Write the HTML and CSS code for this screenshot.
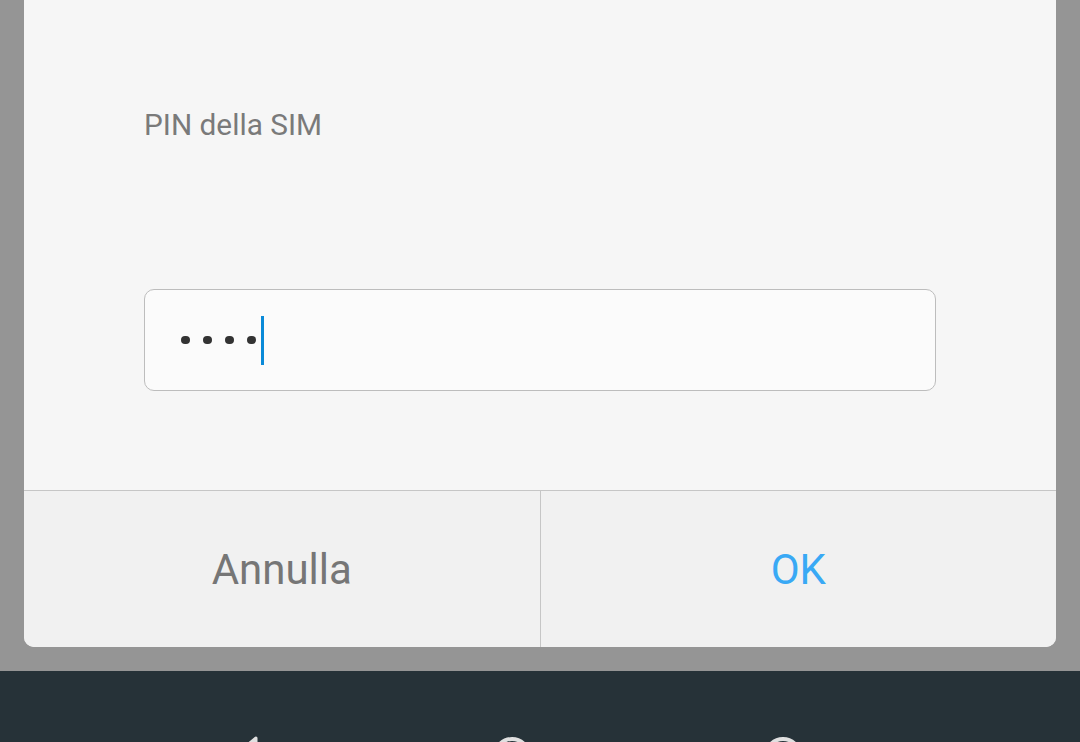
FILE: index.html
```html
<!DOCTYPE html>
<html lang="it">
<head>
<meta charset="utf-8">
<link rel="stylesheet" href="styles.css">
</head>
<body>
<div class="screen">
  <div class="dialog">
    <div class="content">
      <div class="label">PIN della SIM</div>
      <div class="field">
        <span class="dot"></span><span class="dot"></span><span class="dot"></span><span class="dot"></span><span class="cursor"></span>
      </div>
    </div>
    <div class="actions">
      <div class="btn cancel">Annulla</div>
      <div class="btn ok">OK</div>
    </div>
  </div>
  <div class="navbar">
    <svg class="nav-back" width="40" height="40" viewBox="0 0 40 40"><path d="M28 2 L6 20 L28 38 Z" fill="none" stroke="#e0e0e0" stroke-width="3" stroke-linejoin="round"/></svg>
    <svg class="nav-home" width="40" height="40" viewBox="0 0 40 40"><circle cx="20" cy="20" r="17" fill="none" stroke="#e0e0e0" stroke-width="4"/></svg>
    <svg class="nav-recent" width="40" height="40" viewBox="0 0 40 40"><circle cx="20" cy="20" r="17" fill="none" stroke="#e0e0e0" stroke-width="4"/></svg>
  </div>
</div>
</body>
</html>
```

FILE: styles.css
```css
html, body {
  margin: 0;
  padding: 0;
  background: #959595;
  overflow: hidden;
}
.screen {
  width: 1080px;
  height: 742px;
  display: flex;
  flex-direction: column;
  font-family: Roboto, "Noto Sans", sans-serif;
}
.dialog {
  margin: 0 24px;
  height: 647px;
  flex: none;
  background: #f6f6f6;
  border-radius: 0 0 10px 10px;
  overflow: hidden;
  display: flex;
  flex-direction: column;
}
.content {
  height: 490px;
  flex: none;
  padding: 0 120px;
  box-sizing: border-box;
  display: flex;
  flex-direction: column;
}
.label {
  margin-top: 107px;
  font-size: 29.8px;
  line-height: 36px;
  color: #7a7a7a;
  padding-left: 0;
}
.field {
  margin-top: 146px;
  height: 102px;
  box-sizing: border-box;
  border: 1px solid #bdbdbd;
  border-radius: 10px;
  background: #fbfbfb;
  display: flex;
  align-items: center;
  padding-left: 36px;
  gap: 13.5px;
}
.dot {
  width: 8.5px;
  height: 8.5px;
  border-radius: 50%;
  background: #333;
}
.cursor {
  width: 3px;
  height: 49px;
  background: #0a8ad8;
  margin-left: -8px;
}
.actions {
  flex: 1;
  display: flex;
  border-top: 1px solid #c6c6c6;
  background: #f1f1f1;
}
.btn {
  flex: 1;
  display: flex;
  align-items: center;
  justify-content: center;
  font-size: 42px;
  padding-top: 1px;
}
.cancel {
  color: #767676;
  border-right: 1px solid #c6c6c6;
}
.ok {
  color: #39a9f5;
}
.navbar {
  margin-top: 24px;
  flex: 1;
  background: #263238;
  position: relative;
}
.navbar svg {
  position: absolute;
  top: 65px;
}
.nav-back { left: 228px; }
.nav-home { left: 492px; }
.nav-recent { left: 763px; }
```
